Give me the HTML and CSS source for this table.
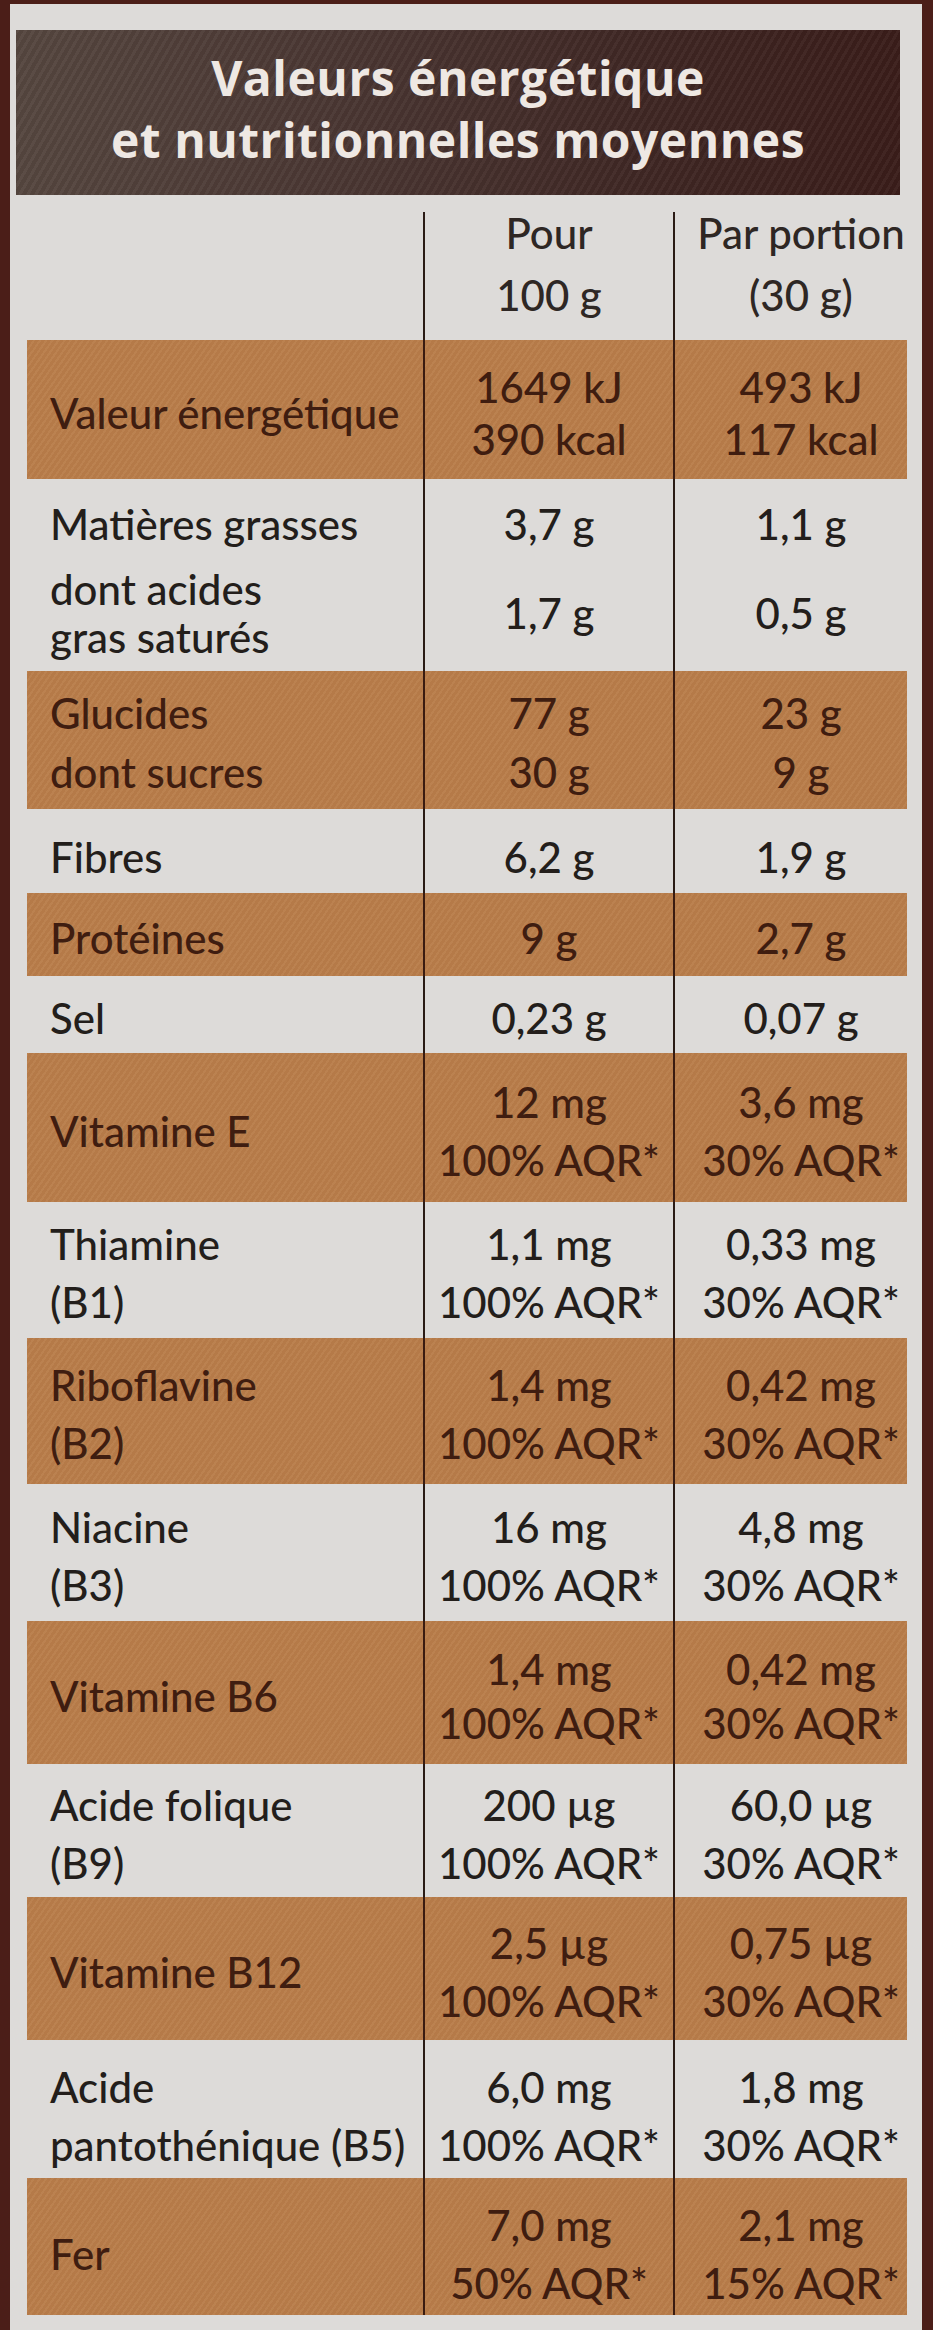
FILE: index.html
```html
<!DOCTYPE html>
<html lang="fr">
<head>
<meta charset="utf-8">
<title>Valeurs nutritionnelles</title>
<link rel="stylesheet" href="styles.css">
</head>
<body>
<div class="panel">
  <div class="title">Valeurs énergétique<br>et nutritionnelles moyennes</div>
  <div class="table">
    <div class="row r-head">
      <div class="c lab"></div>
      <div class="c v1"><span>Pour<br>100 g</span></div>
      <div class="c v2"><span>Par portion<br>(30 g)</span></div>
    </div>
    <div class="row tan r-energy">
      <div class="c lab"><span>Valeur énergétique</span></div>
      <div class="c v1"><span>1649 kJ<br>390 kcal</span></div>
      <div class="c v2"><span>493 kJ<br>117 kcal</span></div>
    </div>
    <div class="row r-fa">
      <div class="c lab"><span>Matières grasses</span></div>
      <div class="c v1"><span>3,7 g</span></div>
      <div class="c v2"><span>1,1 g</span></div>
    </div>
    <div class="row r-fb">
      <div class="c lab"><span class="tight">dont acides<br>gras saturés</span></div>
      <div class="c v1"><span>1,7 g</span></div>
      <div class="c v2"><span>0,5 g</span></div>
    </div>
    <div class="row tan r-carb">
      <div class="c lab"><span>Glucides<br>dont sucres</span></div>
      <div class="c v1"><span>77 g<br>30 g</span></div>
      <div class="c v2"><span>23 g<br>9 g</span></div>
    </div>
    <div class="row r-fib">
      <div class="c lab"><span>Fibres</span></div>
      <div class="c v1"><span>6,2 g</span></div>
      <div class="c v2"><span>1,9 g</span></div>
    </div>
    <div class="row tan r-prot">
      <div class="c lab"><span>Protéines</span></div>
      <div class="c v1"><span>9 g</span></div>
      <div class="c v2"><span>2,7 g</span></div>
    </div>
    <div class="row r-sel">
      <div class="c lab"><span>Sel</span></div>
      <div class="c v1"><span>0,23 g</span></div>
      <div class="c v2"><span>0,07 g</span></div>
    </div>
    <div class="row tan r-vite">
      <div class="c lab"><span>Vitamine E</span></div>
      <div class="c v1"><span>12 mg<br>100% AQR*</span></div>
      <div class="c v2"><span>3,6 mg<br>30% AQR*</span></div>
    </div>
    <div class="row r-b1">
      <div class="c lab"><span>Thiamine<br>(B1)</span></div>
      <div class="c v1"><span>1,1 mg<br>100% AQR*</span></div>
      <div class="c v2"><span>0,33 mg<br>30% AQR*</span></div>
    </div>
    <div class="row tan r-b2">
      <div class="c lab"><span>Riboflavine<br>(B2)</span></div>
      <div class="c v1"><span>1,4 mg<br>100% AQR*</span></div>
      <div class="c v2"><span>0,42 mg<br>30% AQR*</span></div>
    </div>
    <div class="row r-b3">
      <div class="c lab"><span>Niacine<br>(B3)</span></div>
      <div class="c v1"><span>16 mg<br>100% AQR*</span></div>
      <div class="c v2"><span>4,8 mg<br>30% AQR*</span></div>
    </div>
    <div class="row tan r-b6">
      <div class="c lab"><span>Vitamine B6</span></div>
      <div class="c v1"><span>1,4 mg<br>100% AQR*</span></div>
      <div class="c v2"><span>0,42 mg<br>30% AQR*</span></div>
    </div>
    <div class="row r-b9">
      <div class="c lab"><span>Acide folique<br>(B9)</span></div>
      <div class="c v1"><span>200 µg<br>100% AQR*</span></div>
      <div class="c v2"><span>60,0 µg<br>30% AQR*</span></div>
    </div>
    <div class="row tan r-b12">
      <div class="c lab"><span>Vitamine B12</span></div>
      <div class="c v1"><span>2,5 µg<br>100% AQR*</span></div>
      <div class="c v2"><span>0,75 µg<br>30% AQR*</span></div>
    </div>
    <div class="row r-b5">
      <div class="c lab"><span>Acide<br>pantothénique (B5)</span></div>
      <div class="c v1"><span>6,0 mg<br>100% AQR*</span></div>
      <div class="c v2"><span>1,8 mg<br>30% AQR*</span></div>
    </div>
    <div class="row tan r-fer">
      <div class="c lab"><span>Fer</span></div>
      <div class="c v1"><span>7,0 mg<br>50% AQR*</span></div>
      <div class="c v2"><span>2,1 mg<br>15% AQR*</span></div>
    </div>
  </div>
</div>
</body>
</html>
```
FILE: styles.css
```css
html, body {
  margin: 0;
  padding: 0;
  background: #4b1e18;
}
body {
  padding: 4px 11px 0 10px;
  height: 2330px;
  box-sizing: border-box;
  overflow: hidden;
  font-family: Lato, "Liberation Sans", sans-serif;
  font-weight: 500;
  font-size: 42px;
  color: #231e1b;
}
.panel {
  background: #dddbd9;
  padding: 26px 0 15px 0;
}
.title {
  margin-left: 6px;
  width: 884px;
  height: 165px;
  box-sizing: border-box;
  padding-top: 17px;
  background:
    repeating-linear-gradient(120deg, rgba(255,255,255,0.035) 0 3px, rgba(0,0,0,0.03) 3px 7px),
    linear-gradient(90deg, #55463f 0%, #4a3733 35%, #3f2724 70%, #3a1d1a 100%);
  color: #eee8e3;
  font-family: "Open Sans", Lato, sans-serif;
  font-weight: 700;
  font-size: 48px;
  letter-spacing: 0.5px;
  line-height: 62px;
  text-align: center;
}
.table {
  margin-left: 17px;
  width: 880px;
}
.row {
  display: grid;
  grid-template-columns: 396px 250px 234px;
  box-sizing: border-box;
}
.tan {
  background:
    repeating-linear-gradient(125deg, rgba(255,255,255,0.035) 0 2px, rgba(0,0,0,0.025) 2px 5px),
    #b97d4a;
  color: #3f1d10;
}
.c {
  display: flex;
  align-items: center;
  padding-top: 6px;
  line-height: 58px;
  white-space: nowrap;
  box-sizing: border-box;
}
.lab {
  padding-left: 23px;
}
.v1, .v2 {
  justify-content: center;
  text-align: center;
  border-left: 2px solid #2a1b15;
}
.v2 {
  padding-left: 20px;
}
.tan .v1, .tan .v2 {
  border-left-color: #3a1b10;
}

/* header row */
.r-head {
  height: 145px;
  padding-top: 17px;
  color: #2e2724;
}
.r-head .c {
  align-items: flex-start;
  padding-top: 0;
  line-height: 62px;
}
.r-head .c span {
  margin-top: -10px;
}

.r-energy { height: 139px; }
.r-energy .v1, .r-energy .v2 { line-height: 52px; }

.r-fa { height: 76px; }
.r-fa .c { padding-top: 14px; }
.r-fb { height: 116px; }
.r-fb .c { padding-top: 0; }
.tight { line-height: 48px; }

.r-carb { height: 138px; }
.r-carb .c { line-height: 59px; }
.r-fib { height: 84px; }
.r-fib .c { padding-top: 12px; }
.r-prot { height: 83px; }
.r-sel { height: 77px; }
.r-vite { height: 149px; }
.r-b1 { height: 136px; }
.r-b2 { height: 146px; }
.r-b3 { height: 137px; }
.r-b6 { height: 143px; }
.r-b6 .v1, .r-b6 .v2 { line-height: 54px; }
.r-b9 { height: 133px; }
.r-b12 { height: 143px; }
.r-b5 { height: 138px; }
.r-b5 .c { padding-top: 14px; }
.r-fer { height: 137px; }
.r-fer .c { padding-top: 14px; }
```
